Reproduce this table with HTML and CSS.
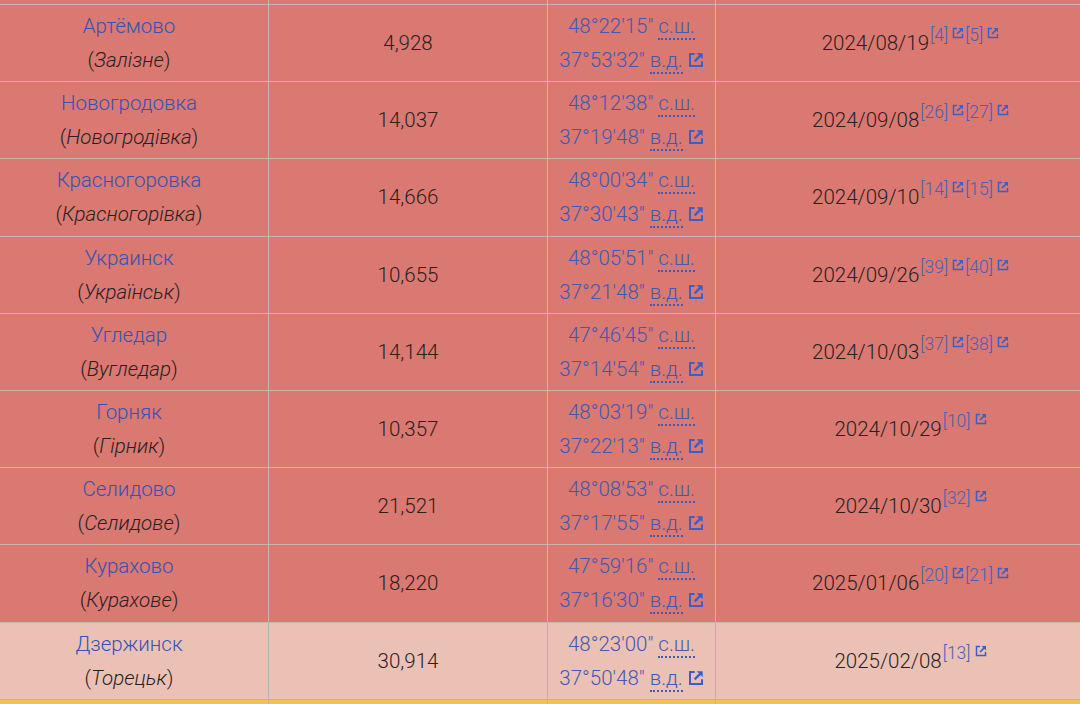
FILE: index.html
```html
<!DOCTYPE html>
<html lang="ru">
<head>
<meta charset="utf-8">
<link rel="stylesheet" href="styles.css">
<title>Населённые пункты</title>
</head>
<body>
<svg width="0" height="0" class="defs" aria-hidden="true">
  <defs>
    <symbol id="ext" viewBox="0 0 12 12">
      <path d="M5 1.5H1.5v9h9V7" fill="none" stroke="currentColor" stroke-width="1.5"/>
      <path d="M6.5 1h4.5v4.5z" fill="currentColor"/>
      <path d="M10.2 1.8L5 7" fill="none" stroke="currentColor" stroke-width="1.7"/>
    </symbol>
  </defs>
</svg>
<table class="tbl">
  <colgroup>
    <col class="c1"><col class="c2"><col class="c3"><col class="c4">
  </colgroup>
  <tbody>
    <tr class="edge red"><td></td><td></td><td></td><td></td></tr>

    <tr class="red">
      <td><a class="lnk">Артёмово</a><br>(<i>Залізне</i>)</td>
      <td>4,928</td>
      <td class="geo">48°22'15" <abbr>с.ш.</abbr><br>37°53'32" <abbr>в.д.</abbr> <svg class="ico"><use href="#ext"/></svg></td>
      <td>2024/08/19<sup class="ref">[4]<svg class="sico"><use href="#ext"/></svg>[5]<svg class="sico"><use href="#ext"/></svg></sup></td>
    </tr>
    <tr class="red">
      <td><a class="lnk">Новогродовка</a><br>(<i>Новогродівка</i>)</td>
      <td>14,037</td>
      <td class="geo">48°12'38" <abbr>с.ш.</abbr><br>37°19'48" <abbr>в.д.</abbr> <svg class="ico"><use href="#ext"/></svg></td>
      <td>2024/09/08<sup class="ref">[26]<svg class="sico"><use href="#ext"/></svg>[27]<svg class="sico"><use href="#ext"/></svg></sup></td>
    </tr>
    <tr class="red">
      <td><a class="lnk">Красногоровка</a><br>(<i>Красногорівка</i>)</td>
      <td>14,666</td>
      <td class="geo">48°00'34" <abbr>с.ш.</abbr><br>37°30'43" <abbr>в.д.</abbr> <svg class="ico"><use href="#ext"/></svg></td>
      <td>2024/09/10<sup class="ref">[14]<svg class="sico"><use href="#ext"/></svg>[15]<svg class="sico"><use href="#ext"/></svg></sup></td>
    </tr>
    <tr class="red">
      <td><a class="lnk">Украинск</a><br>(<i>Українськ</i>)</td>
      <td>10,655</td>
      <td class="geo">48°05'51" <abbr>с.ш.</abbr><br>37°21'48" <abbr>в.д.</abbr> <svg class="ico"><use href="#ext"/></svg></td>
      <td>2024/09/26<sup class="ref">[39]<svg class="sico"><use href="#ext"/></svg>[40]<svg class="sico"><use href="#ext"/></svg></sup></td>
    </tr>
    <tr class="red">
      <td><a class="lnk">Угледар</a><br>(<i>Вугледар</i>)</td>
      <td>14,144</td>
      <td class="geo">47°46'45" <abbr>с.ш.</abbr><br>37°14'54" <abbr>в.д.</abbr> <svg class="ico"><use href="#ext"/></svg></td>
      <td>2024/10/03<sup class="ref">[37]<svg class="sico"><use href="#ext"/></svg>[38]<svg class="sico"><use href="#ext"/></svg></sup></td>
    </tr>
    <tr class="red">
      <td><a class="lnk">Горняк</a><br>(<i>Гірник</i>)</td>
      <td>10,357</td>
      <td class="geo">48°03'19" <abbr>с.ш.</abbr><br>37°22'13" <abbr>в.д.</abbr> <svg class="ico"><use href="#ext"/></svg></td>
      <td>2024/10/29<sup class="ref">[10]<svg class="sico"><use href="#ext"/></svg></sup></td>
    </tr>
    <tr class="red">
      <td><a class="lnk">Селидово</a><br>(<i>Селидове</i>)</td>
      <td>21,521</td>
      <td class="geo">48°08'53" <abbr>с.ш.</abbr><br>37°17'55" <abbr>в.д.</abbr> <svg class="ico"><use href="#ext"/></svg></td>
      <td>2024/10/30<sup class="ref">[32]<svg class="sico"><use href="#ext"/></svg></sup></td>
    </tr>
    <tr class="red">
      <td><a class="lnk">Курахово</a><br>(<i>Курахове</i>)</td>
      <td>18,220</td>
      <td class="geo">47°59'16" <abbr>с.ш.</abbr><br>37°16'30" <abbr>в.д.</abbr> <svg class="ico"><use href="#ext"/></svg></td>
      <td>2025/01/06<sup class="ref">[20]<svg class="sico"><use href="#ext"/></svg>[21]<svg class="sico"><use href="#ext"/></svg></sup></td>
    </tr>
    <tr class="pale">
      <td><a class="lnk">Дзержинск</a><br>(<i>Торецьк</i>)</td>
      <td>30,914</td>
      <td class="geo">48°23'00" <abbr>с.ш.</abbr><br>37°50'48" <abbr>в.д.</abbr> <svg class="ico"><use href="#ext"/></svg></td>
      <td>2025/02/08<sup class="ref">[13]<svg class="sico"><use href="#ext"/></svg></sup></td>
    </tr>
    <tr class="edge yellow"><td></td><td></td><td></td><td></td></tr>
  </tbody>
</table>
</body>
</html>
```
FILE: styles.css
```css
html, body {
  margin: 0;
  padding: 0;
  background: #da7872;
  overflow: hidden;
  width: 1080px;
  height: 704px;
}
.defs {
  position: absolute;
  width: 0;
  height: 0;
}
.tbl {
  border-collapse: collapse;
  table-layout: fixed;
  width: 1117px;
  margin-left: -11px;
  font-family: Roboto, "Noto Sans", sans-serif;
  font-size: 20.5px;
  font-weight: 300;
  color: #2a1f1f;
}
.c1 { width: 279px; }
.c2 { width: 279px; }
.c3 { width: 168px; }
.c4 { width: 391px; }
.tbl td {
  border: 1px solid #c9b3b3;
  text-align: center;
  vertical-align: middle;
  line-height: 34px;
  padding: 4.1px 4px;
  white-space: nowrap;
}
.tbl tr.edge td { padding: 0; line-height: 0; }
.tbl tr.edge.red td { height: 4px; border-top: none; }
.tbl tr.edge.yellow td { height: 10px; border-bottom: none; }
.red td { background: #da7872; }
.pale td { background: #ecc1b5; border-color: #b8b2b8; }
.yellow td { background: #eec24c; border-color: #d9b27a; }
.lnk { color: #3553b4; text-decoration: none; }
i { font-style: italic; }
.geo { color: #4458b0; }
abbr {
  text-decoration: none;
  border-bottom: 2px dotted #4458b0;
  padding-bottom: 0;
}
.ico {
  width: 16px;
  height: 16px;
  color: #3b5fc9;
  vertical-align: -1px;
}
.ref {
  font-size: 17.5px;
  line-height: 1;
  vertical-align: 9px;
  color: #4a60b4;
  margin-left: 1px;
}
.sico {
  width: 12px;
  height: 12px;
  color: #3b5fc9;
  margin: 0 1px 0 4px;
  vertical-align: 2px;
}
```
